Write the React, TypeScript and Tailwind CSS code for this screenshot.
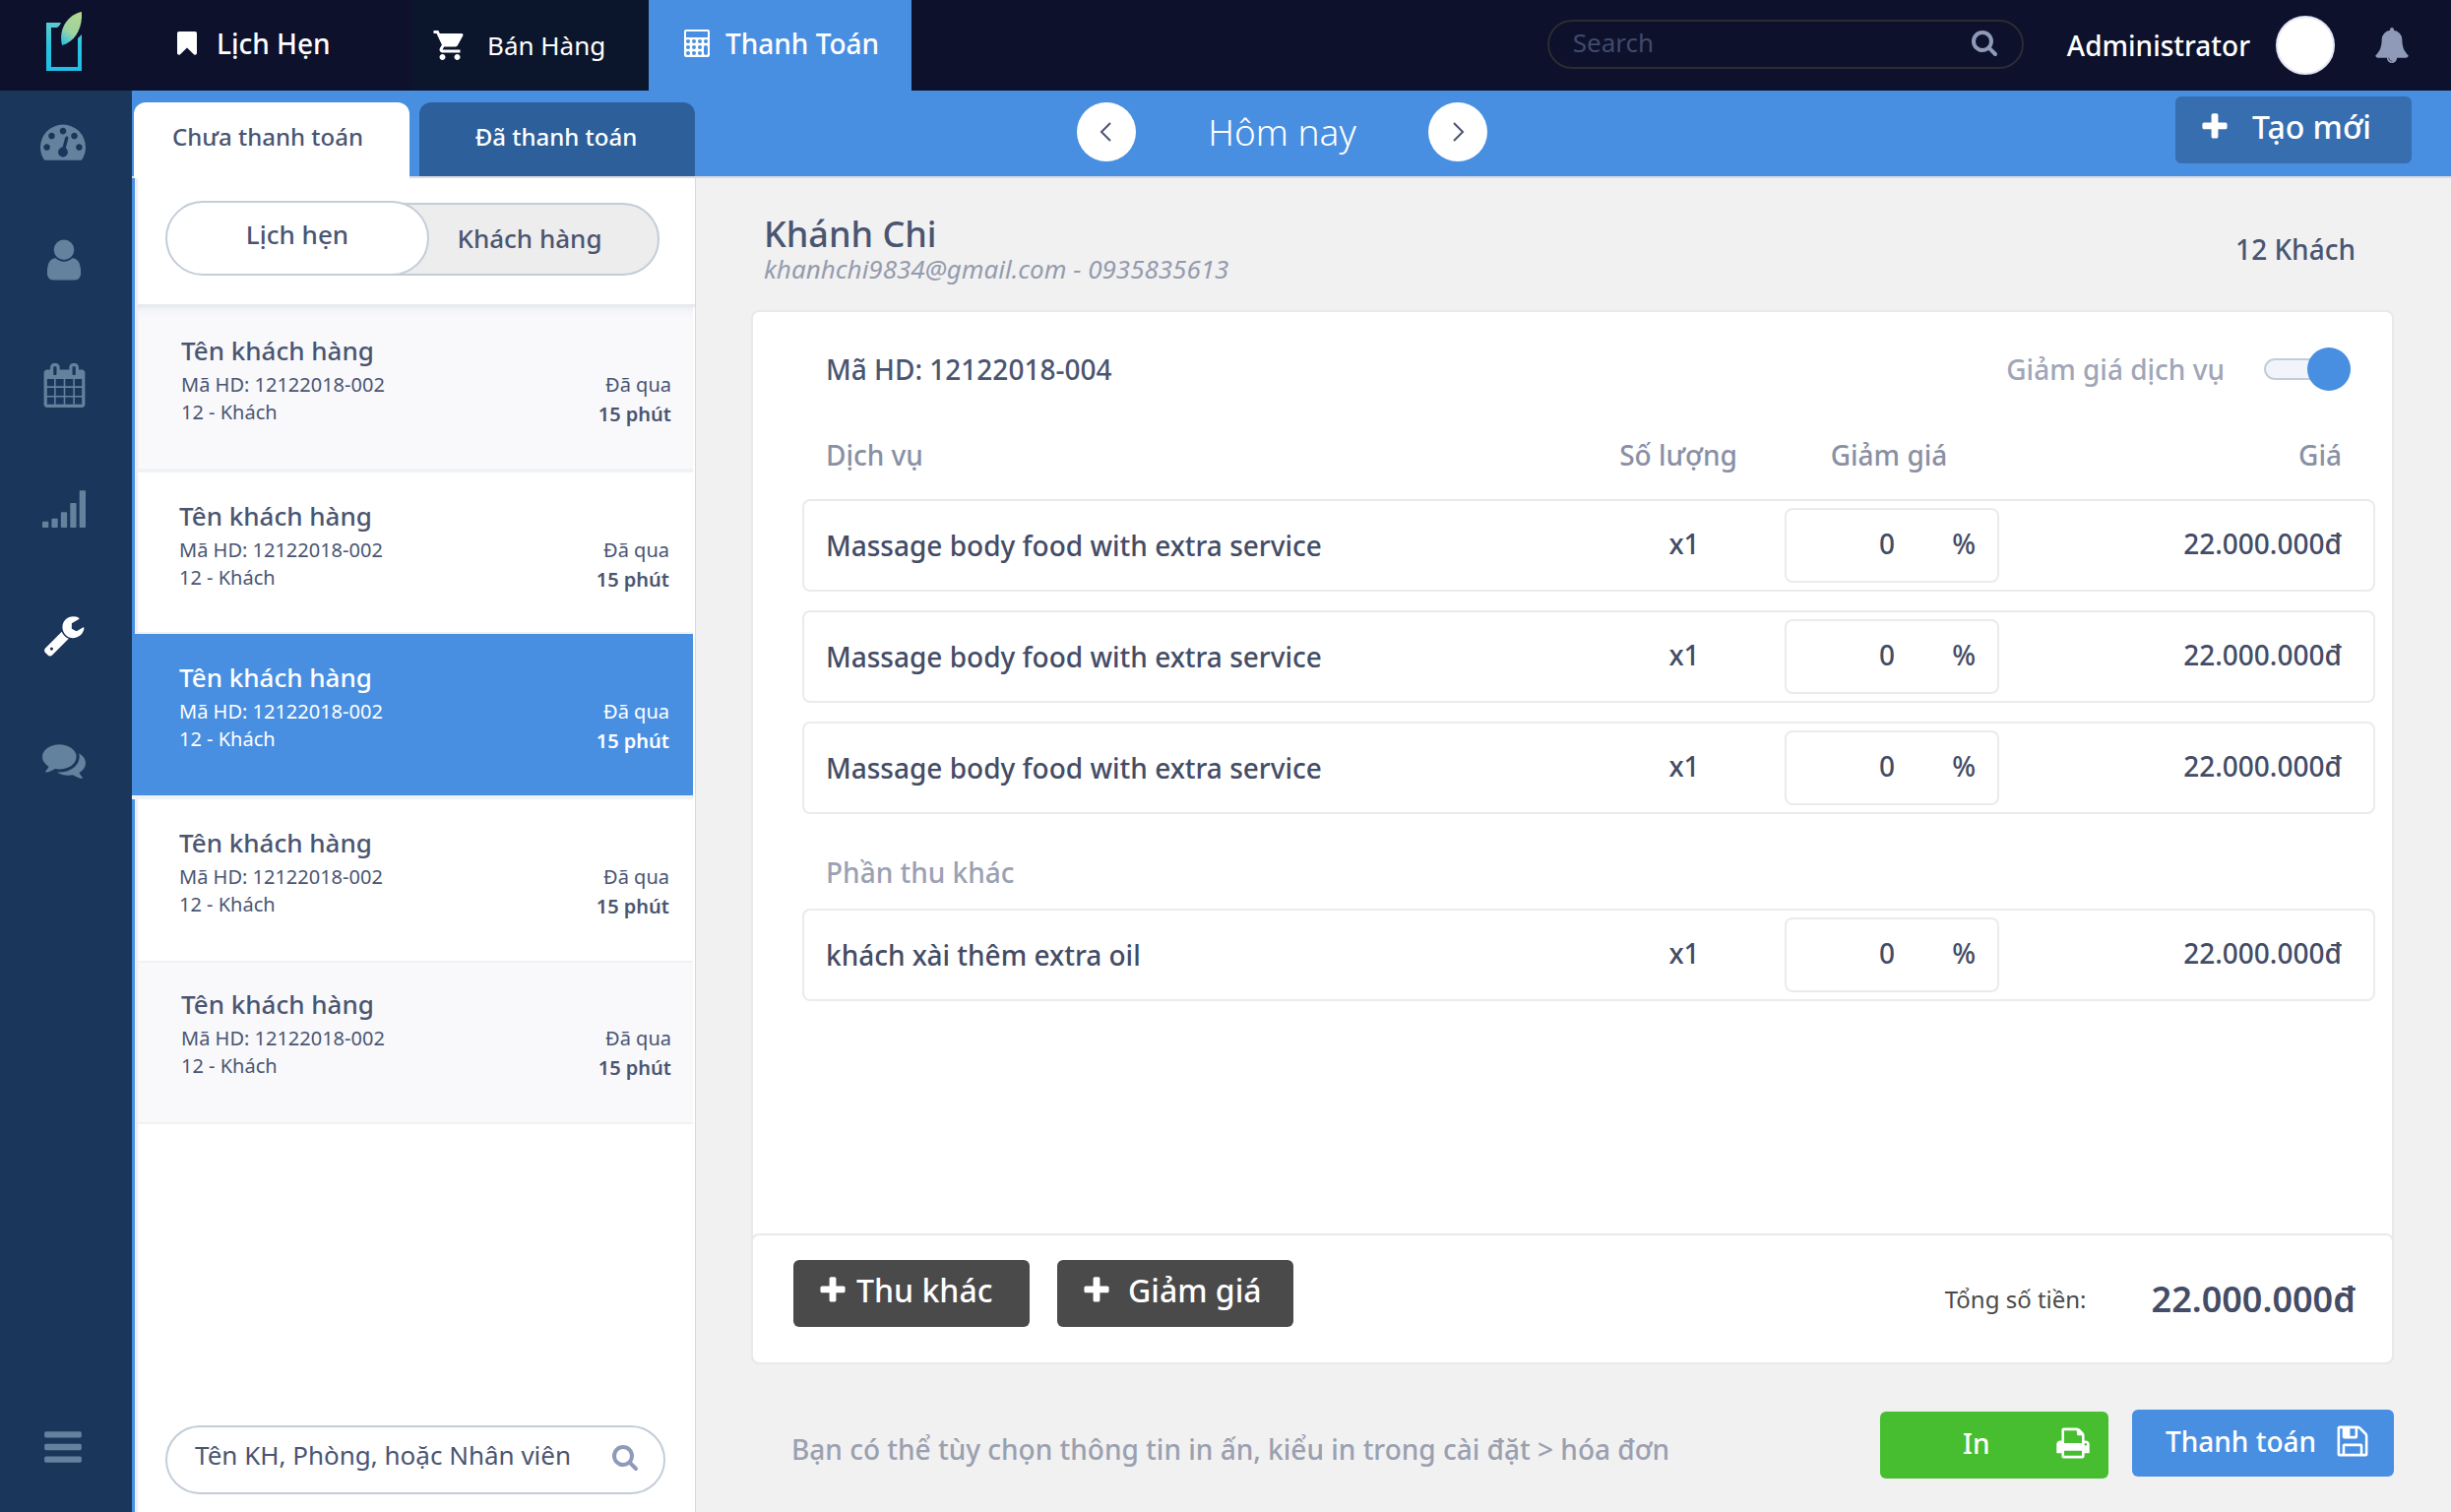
import type { ReactNode } from "react";
import { MdShoppingCart } from "react-icons/md";

const ICONS = {
  search:
    "M1216 832q0-185-131.5-316.5t-316.5-131.5-316.5 131.5-131.5 316.5 131.5 316.5 316.5 131.5 316.5-131.5 131.5-316.5zm512 832q0 52-38 90t-90 38q-54 0-90-38l-343-342q-179 124-399 124-143 0-273.5-55.5t-225-150-150-225-55.5-273.5 55.5-273.5 150-225 225-150 273.5-55.5 273.5 55.5 225 150 150 225 55.5 273.5q0 220-124 399l343 343q37 37 37 90z",
  plus: "M1600 736v192q0 40-28 68t-68 28h-416v416q0 40-28 68t-68 28h-192q-40 0-68-28t-28-68v-416h-416q-40 0-68-28t-28-68v-192q0-40 28-68t68-28h416v-416q0-40 28-68t68-28h192q40 0 68 28t28 68v416h416q40 0 68 28t28 68z",
  bars: "M1664 1344v128q0 26-19 45t-45 19h-1408q-26 0-45-19t-19-45v-128q0-26 19-45t45-19h1408q26 0 45 19t19 45zm0-512v128q0 26-19 45t-45 19h-1408q-26 0-45-19t-19-45v-128q0-26 19-45t45-19h1408q26 0 45 19t19 45zm0-512v128q0 26-19 45t-45 19h-1408q-26 0-45-19t-19-45v-128q0-26 19-45t45-19h1408q26 0 45 19t19 45z",
  gauge:
    "M384 1152q0-53-37.5-90.5t-90.5-37.5-90.5 37.5-37.5 90.5 37.5 90.5 90.5 37.5 90.5-37.5 37.5-90.5zm192-448q0-53-37.5-90.5t-90.5-37.5-90.5 37.5-37.5 90.5 37.5 90.5 90.5 37.5 90.5-37.5 37.5-90.5zm428 481l101-382q6-26-7.5-48.5t-38.5-29.5-48 6.5-30 39.5l-101 382q-60 5-107 43.5t-63 98.5q-20 77 20 146t117 89 146-20 89-117q16-60-6-117t-72-91zm660-33q0-53-37.5-90.5t-90.5-37.5-90.5 37.5-37.5 90.5 37.5 90.5 90.5 37.5 90.5-37.5 37.5-90.5zm-640-640q0-53-37.5-90.5t-90.5-37.5-90.5 37.5-37.5 90.5 37.5 90.5 90.5 37.5 90.5-37.5 37.5-90.5zm448 192q0-53-37.5-90.5t-90.5-37.5-90.5 37.5-37.5 90.5 37.5 90.5 90.5 37.5 90.5-37.5 37.5-90.5zm320 448q0 261-141 483-19 29-54 29h-1402q-35 0-54-29-141-221-141-483 0-182 71-348t191-286 286-191 348-71 348 71 286 191 191 286 71 348z",
  user: "M1536 1399q0 109-62.5 187t-150.5 78h-854q-88 0-150.5-78t-62.5-187q0-85 8.5-160.5t31.5-152 58.5-131 94-89 134.5-34.5q131 128 313 128t313-128q76 0 134.5 34.5t94 89 58.5 131 31.5 152 8.5 160.5zm-256-887q0 159-112.5 271.5t-271.5 112.5-271.5-112.5-112.5-271.5 112.5-271.5 271.5-112.5 271.5 112.5 112.5 271.5z",
  calendar:
    "M192 1664h288v-288h-288v288zm352 0h320v-288h-320v288zm-352-352h288v-320h-288v320zm352 0h320v-320h-320v320zm-352-384h288v-288h-288v288zm736 736h320v-288h-320v288zm-384-736h320v-288h-320v288zm768 736h288v-288h-288v288zm-384-352h320v-320h-320v320zm-352-864v-288q0-13-9.5-22.5t-22.5-9.5h-64q-13 0-22.5 9.5t-9.5 22.5v288q0 13 9.5 22.5t22.5 9.5h64q13 0 22.5-9.5t9.5-22.5zm736 864h288v-320h-288v320zm-384-384h320v-288h-320v288zm384 0h288v-288h-288v288zm32-480v-288q0-13-9.5-22.5t-22.5-9.5h-64q-13 0-22.5 9.5t-9.5 22.5v288q0 13 9.5 22.5t22.5 9.5h64q13 0 22.5-9.5t9.5-22.5zm384-64v1280q0 52-38 90t-90 38h-1408q-52 0-90-38t-38-90v-1280q0-52 38-90t90-38h128v-96q0-66 47-113t113-47h64q66 0 113 47t47 113v96h384v-96q0-66 47-113t113-47h64q66 0 113 47t47 113v96h128q52 0 90 38t38 90z",
  signal:
    "M32 1376h192q32 0 32 32v192q0 32-32 32h-192q-32 0-32-32v-192q0-32 32-32zM416 1248h192q32 0 32 32v320q0 32-32 32h-192q-32 0-32-32v-320q0-32 32-32zM800 992h192q32 0 32 32v576q0 32-32 32h-192q-32 0-32-32v-576q0-32 32-32zM1184 608h192q32 0 32 32v960q0 32-32 32h-192q-32 0-32-32v-960q0-32 32-32zM1568 96h192q32 0 32 32v1472q0 32-32 32h-192q-32 0-32-32v-1472q0-32 32-32z",
  wrench:
    "M448 1472q0-26-19-45t-45-19-45 19-19 45 19 45 45 19 45-19 19-45zm644-420l-682 682q-37 37-90 37-52 0-91-37l-106-108q-38-36-38-90 0-53 38-91l681-681q39 98 114.5 173.5t173.5 114.5zm634-435q0 39-23 106-47 134-164.5 217.5t-258.5 83.5q-185 0-316.5-131.5t-131.5-316.5 131.5-316.5 316.5-131.5q58 0 121.5 16.5t107.5 46.5q16 11 16 28t-16 28l-293 169v224l193 107q5-3 79-48.5t135.5-81 70.5-35.5q15 0 23.5 10t8.5 25z",
  comments:
    "M1408 768q0 139-94 257t-256.5 186.5-353.5 68.5q-86 0-176-16-124 88-278 128-36 9-86 16h-3q-11 0-20.5-8t-11.5-21q-1-3-1-6.5t.5-6.5 2-6l2.5-5 3.5-5.5 4-5 4.5-5 4-4.5q5-6 23-25t26-29.5 22.5-29 25-38.5 20.5-44q-124-72-195-177t-71-224q0-139 94-257t256.5-186.5 353.5-68.5 353.5 68.5 256.5 186.5 94 257zm384 256q0 120-71 224.5t-195 176.5q10 24 20.5 44t25 38.5 22.5 29 26 29.5 23 25q1 1 4 4.5t4.5 5 4 5 3.5 5.5l2.5 5 2 6 .5 6.5-1 6.5q-3 14-13 22t-22 7q-50-7-86-16-154-40-278-128-90 16-176 16-271 0-472-132 58 4 88 4 161 0 309-45t264-129q125-92 192-212t67-254q0-77-23-152 129 71 204 178t75 230z",
  print:
    "M448 1536h896v-256h-896v256zm0-640h896v-384h-160q-40 0-68-28t-28-68v-160h-640v640zm1152 64q0-26-19-45t-45-19-45 19-19 45 19 45 45 19 45-19 19-45zm128 0v416q0 13-9.5 22.5t-22.5 9.5h-224v160q0 40-28 68t-68 28h-960q-40 0-68-28t-28-68v-160h-224q-13 0-22.5-9.5t-9.5-22.5v-416q0-79 56.5-135.5t135.5-56.5h64v-544q0-40 28-68t68-28h672q40 0 88 20t76 48l152 152q28 28 48 76t20 88v256h64q79 0 135.5 56.5t56.5 135.5z",
  save: "M512 1536h768v-384h-768v384zm896 0h128v-896q0-14-10-38.5t-20-34.5l-281-281q-10-10-34-20t-39-10v416q0 40-28 68t-68 28h-576q-40 0-68-28t-28-68v-416h-128v1280h128v-416q0-40 28-68t68-28h832q40 0 68 28t28 68v416zm-384-928v-320q0-13-9.5-22.5t-22.5-9.5h-192q-13 0-22.5 9.5t-9.5 22.5v320q0 13 9.5 22.5t22.5 9.5h192q13 0 22.5-9.5t9.5-22.5zm640 32v928q0 40-28 68t-68 28h-1344q-40 0-68-28t-28-68v-1344q0-40 28-68t68-28h928q40 0 88 20t76 48l280 280q28 28 48 76t20 88z",
  bell: "M912 1696q0-16-16-16-59 0-101.5-42.5t-42.5-101.5q0-16-16-16t-16 16q0 73 51.5 124.5t124.5 51.5q16 0 16-16zm816-288q0 52-38 90t-90 38h-448q0 106-75 181t-181 75-181-75-75-181h-448q-52 0-90-38t-38-90q50-42 91-88t85-119.5 74.5-158.5 50-206 19.5-260q0-152 117-282.5t307-158.5q-8-19-8-39 0-40 28-68t68-28 68 28 28 68q0 20-8 39 190 28 307 158.5t117 282.5q0 139 19.5 260t50 206 74.5 158.5 85 119.5 91 88z",
  bookmark:
    "M1420 128q23 0 44 9 33 13 52.5 41t19.5 62v1289q0 34-19.5 62t-52.5 41q-19 8-44 8-48 0-83-32l-441-424-441 424q-36 33-83 33-23 0-44-9-33-13-52.5-41t-19.5-62v-1289q0-34 19.5-62t52.5-41q21-9 44-9h1048z",
};

type IconName = keyof typeof ICONS;

function Icon({ name, className }: { name: IconName; className: string }) {
  return (
    <svg viewBox="0 0 1792 1792" fill="currentColor" fillRule="nonzero" aria-hidden="true" className={className}>
      <path d={ICONS[name]} />
    </svg>
  );
}

function Logo() {
  return (
    <svg viewBox="0 0 36 62" className="h-[62px] w-9" aria-hidden="true">
      <defs>
        <linearGradient id="frame" x1="0" y1="0" x2="0" y2="1">
          <stop offset="0" stopColor="#5ccbcf" />
          <stop offset="0.5" stopColor="#27c4e2" />
          <stop offset="1" stopColor="#1fbfe6" />
        </linearGradient>
        <linearGradient id="leaf" x1="0.7" y1="0" x2="0.2" y2="1">
          <stop offset="0" stopColor="#b0d88f" />
          <stop offset="0.6" stopColor="#9ed2a2" />
          <stop offset="1" stopColor="#2cc3df" />
        </linearGradient>
      </defs>
      <path d="M0 12H15Q14 15 11 17H5V57H32V28L36 24V61H0Z" fill="url(#frame)" />
      <path d="M36 1C37 17 30 31 16 35C12 18 22 4 36 1Z" fill="url(#leaf)" />
    </svg>
  );
}

function CalculatorIcon() {
  return (
    <svg viewBox="0 0 26 28" className="h-7 w-[26px]" aria-hidden="true">
      <rect width="26" height="28" rx="2" fill="#fff" />
      <g fill="#488fe2">
        <rect x="2" y="2" width="22" height="6" />
        <circle cx="4" cy="12" r="2" />
        <circle cx="10" cy="12" r="2" />
        <circle cx="16" cy="12" r="2" />
        <circle cx="22" cy="12" r="2" />
        <circle cx="4" cy="18" r="2" />
        <circle cx="10" cy="18" r="2" />
        <circle cx="16" cy="18" r="2" />
        <circle cx="4" cy="24" r="2" />
        <circle cx="10" cy="24" r="2" />
        <circle cx="16" cy="24" r="2" />
        <rect x="20" y="16" width="4" height="10" rx="2" />
      </g>
    </svg>
  );
}

function Header() {
  return (
    <header className="flex h-[92px] items-stretch bg-[#0d112c] text-[28px] font-medium text-white">
      <a href="#home" aria-label="Home" className="flex w-[134px] items-center pb-2 pl-[47px]">
        <Logo />
      </a>
      <nav className="flex items-stretch">
        <a href="#lich-hen" className="flex w-[284px] items-center gap-4 pb-1 pl-[42px]">
          <Icon name="bookmark" className="size-7" />
          Lịch Hẹn
        </a>
        <a href="#ban-hang" className="flex w-[241px] items-center gap-5 bg-[#0b152c] pl-[21px] text-[26px] font-normal">
          <MdShoppingCart className="size-9" aria-hidden="true" />
          Bán Hàng
        </a>
        <a href="#thanh-toan" className="flex w-[267px] items-center gap-4 bg-[#488fe2] pb-1 pl-9">
          <CalculatorIcon />
          Thanh Toán
        </a>
      </nav>
      <div className="ml-auto flex items-center pr-[42px]">
        <label className="mr-11 mb-[2px] flex h-[50px] w-[484px] items-center rounded-full border-2 border-[#292d33] pr-6 pl-6">
          <input
            type="text"
            aria-label="Search"
            placeholder="Search"
            className="mb-1 min-w-0 flex-1 bg-transparent text-[26px] font-normal outline-none placeholder:text-[#404a6b]"
          />
          <Icon name="search" className="mb-1 size-7 text-[#8f9ab8]" />
        </label>
        <span>Administrator</span>
        <span className="ml-[26px] size-[60px] rounded-full border-2 border-[#e3e6f2] bg-white" />
        <button type="button" aria-label="Notifications" className="ml-10">
          <Icon name="bell" className="size-9 text-[#8f9ab8]" />
        </button>
      </div>
    </header>
  );
}

function SideButton({ name, label, size, active }: { name: IconName; label: string; size: string; active?: boolean }) {
  return (
    <button
      type="button"
      aria-label={label}
      className={`flex h-[46px] w-full items-center justify-center ${active ? "text-white" : "text-[#62829d]"}`}
    >
      <Icon name={name} className={size} />
    </button>
  );
}

function Sidebar() {
  return (
    <aside className="flex w-[134px] shrink-0 flex-col bg-[#1b365b] pt-7 pr-1 pb-[43px]">
      <nav className="flex flex-col gap-[81px]">
        <div className="-mb-[6px] pr-[3px]">
          <SideButton name="gauge" label="Dashboard" size="size-[46px]" />
        </div>
        <SideButton name="user" label="Customers" size="size-12" />
        <SideButton name="calendar" label="Calendar" size="size-[45px]" />
        <SideButton name="signal" label="Reports" size="size-11" />
        <SideButton name="wrench" label="Tools" size="size-11" active />
        <SideButton name="comments" label="Messages" size="size-11" />
      </nav>
      <div className="mt-auto pr-[3px]">
        <SideButton name="bars" label="Menu" size="size-11" />
      </div>
    </aside>
  );
}

type Tone = "tinted" | "plain" | "active";

const CUSTOMERS: { tone: Tone; className: string }[] = [
  { tone: "tinted", className: "h-[168px] border-b-4 bg-[#f9f9fc] pt-[26px] pl-11 pr-[22px] shadow-[inset_0_8px_8px_-6px_#e7ebee]" },
  { tone: "plain", className: "h-[164px] border-b-2 pt-[26px] pl-[42px] pr-6" },
  { tone: "active", className: "-ml-[6px] h-[168px] border-b-4 bg-[#488fe2] bg-clip-padding pt-[26px] pl-12 pr-6 text-white" },
  { tone: "plain", className: "h-[166px] border-b-2 pt-[26px] pl-[42px] pr-6" },
  { tone: "tinted", className: "h-[164px] border-b-2 bg-[#f9f9fc] pt-6 pl-11 pr-[22px]" },
];

function CustomerRow({ tone, className }: { tone: Tone; className: string }) {
  return (
    <li className={`border-[#eff3f6] ${className}`}>
      <a href="#khach-hang" aria-current={tone === "active"} className="block">
        <h3 className="text-[26px] leading-9 font-medium">Tên khách hàng</h3>
        <div className="mt-[3px] flex justify-between text-[20px] leading-7">
          <span>Mã HD: 12122018-002</span>
          <span>Đã qua</span>
        </div>
        <div className="flex justify-between text-[20px] leading-7">
          <span>12 - Khách</span>
          <span className="pt-[2px] font-semibold">15 phút</span>
        </div>
      </a>
    </li>
  );
}

function CustomerPanel() {
  return (
    <section className="flex w-[573px] shrink-0 border-r border-l-[3px] border-[#d8d8d8] border-l-[#488fe2]">
      <div className="flex min-w-0 flex-1 flex-col border-l-[3px] border-[#eeeef0] bg-white">
        <div className="-mt-px flex pt-6 pl-7">
          <button
            type="button"
            className="z-10 h-[76px] w-[268px] rounded-full border-2 border-[#c3cdd8] bg-white pb-2 text-[26px] font-medium"
          >
            Lịch hẹn
          </button>
          <button
            type="button"
            className="mt-[2px] -ml-[50px] h-[74px] w-[284px] rounded-r-full border-2 border-[#c3cdd8] bg-[#ededed] pb-[2px] pl-5 text-[26px] font-medium"
          >
            Khách hàng
          </button>
        </div>
        <ul className="mt-[29px] border-t-[3px] border-[#e7ebee] pr-[2px]">
          {CUSTOMERS.map((c, i) => (
            <CustomerRow key={i} {...c} />
          ))}
        </ul>
        <label className="mt-auto mr-[30px] mb-[18px] ml-7 flex h-[70px] items-center rounded-full border-2 border-[#c3cdd8] pr-[25px] pl-7">
          <input
            type="text"
            aria-label="Tìm kiếm khách hàng"
            defaultValue="Tên KH, Phòng, hoặc Nhân viên"
            className="mb-[10px] min-w-0 flex-1 bg-transparent text-[26px] outline-none"
          />
          <Icon name="search" className="mb-[6px] size-7 text-[#8f9ab8]" />
        </label>
      </div>
    </section>
  );
}

function DayBar() {
  return (
    <div className="flex h-[89px] border-b-2 border-[#dcdce0] bg-[#488fe2]">
      <div className="flex gap-[10px] pt-3 pl-[2px] text-[24px] font-medium">
        <button type="button" className="-mb-[2px] w-[280px] rounded-t-xl bg-white pr-2 pb-2">
          Chưa thanh toán
        </button>
        <button type="button" className="w-[280px] rounded-t-xl bg-[#2d5f9a] pr-[2px] pb-[6px] text-white">
          Đã thanh toán
        </button>
      </div>
      <div className="flex flex-1 items-center justify-between pr-10 pb-[3px] pl-[388px] text-white">
        <div className="flex w-[417px] items-center justify-between">
          <button type="button" aria-label="Previous day" className="flex size-[60px] items-center justify-center rounded-full bg-white">
            <svg viewBox="0 0 24 24" className="size-6" fill="none" stroke="#4a5572" strokeWidth="2" aria-hidden="true">
              <path d="M16 3L7 12L16 21" />
            </svg>
          </button>
          <h1 className="text-[37px] font-light">Hôm nay</h1>
          <button type="button" aria-label="Next day" className="flex size-[60px] items-center justify-center rounded-full bg-white">
            <svg viewBox="0 0 24 24" className="size-6" fill="none" stroke="#4a5572" strokeWidth="2" aria-hidden="true">
              <path d="M8 3L17 12L8 21" />
            </svg>
          </button>
        </div>
        <button
          type="button"
          className="mb-1 flex h-[68px] w-[240px] items-center gap-[22px] rounded-md bg-[#366eb0] pb-[6px] pl-6 text-[32px] font-medium"
        >
          <Icon name="plus" className="size-8" />
          Tạo mới
        </button>
      </div>
    </div>
  );
}

function ItemRow({ name }: { name: string }) {
  const cell = "h-[94px] border-y-2 border-[#ebebeb] p-0";
  return (
    <tr className="text-[#444c66]">
      <td className={`${cell} rounded-l-lg border-l-2 pl-[22px]`}>{name}</td>
      <td className={`${cell} pb-1 pl-[2px] text-center`}>x1</td>
      <td className={cell}>
        <label className="mx-auto flex h-[76px] w-[218px] items-center rounded-lg border-2 border-[#ebebeb] pr-[22px] pb-1">
          <input type="text" aria-label={`Giảm giá: ${name}`} defaultValue="0" className="w-[110px] bg-transparent text-right outline-none" />
          <span className="ml-auto">%</span>
        </label>
      </td>
      <td className={`${cell} rounded-r-lg border-r-2 pr-8 pb-1 text-right`}>22.000.000đ</td>
    </tr>
  );
}

function ItemsTable() {
  return (
    <table className="w-full border-separate border-spacing-x-0 border-spacing-y-[19px] text-[28px] leading-9 font-medium">
      <thead>
        <tr className="text-[#8a90a4]">
          <th className="h-[52px] p-0 pl-6 text-left font-medium">Dịch vụ</th>
          <th className="w-[170px] p-0 pr-[10px] text-center font-medium">Số lượng</th>
          <th className="w-[254px] p-0 pr-[6px] text-center font-medium">Giảm giá</th>
          <th className="w-[364px] p-0 pr-[34px] text-right font-medium">Giá</th>
        </tr>
      </thead>
      <tbody>
        <ItemRow name="Massage body food with extra service" />
        <ItemRow name="Massage body food with extra service" />
        <ItemRow name="Massage body food with extra service" />
        <tr className="text-[#9ba1b3]">
          <th colSpan={4} className="h-[58px] p-0 pl-6 text-left align-bottom font-medium">
            Phần thu khác
          </th>
        </tr>
        <ItemRow name="khách xài thêm extra oil" />
      </tbody>
    </table>
  );
}

function DarkButton({ gap, children }: { gap: string; children: ReactNode }) {
  return (
    <button
      type="button"
      className={`flex h-[68px] w-[240px] items-center rounded-md bg-[#4a4a4a] pb-[6px] pl-6 text-[32px] font-medium text-white ${gap}`}
    >
      <Icon name="plus" className="size-8" />
      {children}
    </button>
  );
}

function Invoice() {
  return (
    <main className="flex flex-1 flex-col bg-[#f1f1f1] pr-[58px] pb-[34px] pl-14">
      <div className="flex items-center justify-between pt-[34px] pr-[39px] pl-[13px]">
        <div>
          <h2 className="text-[36px] leading-[46px] font-medium">Khánh Chi</h2>
          <p className="text-[26px] leading-6 text-[#959bae] italic">khanhchi9834@gmail.com - 0935835613</p>
        </div>
        <p className="pt-[6px] text-[28px] font-medium">12 Khách</p>
      </div>
      <section className="mt-[30px] flex flex-1 flex-col rounded-lg border-2 border-[#e9e9e9] bg-white">
        <div className="flex-1 pr-[17px] pl-[50px]">
          <div className="flex items-center justify-between pt-9 pr-[25px] pl-6 text-[28px] font-medium">
            <h3>Mã HD: 12122018-004</h3>
            <label className="flex items-center gap-10 text-[#a0a6b7]">
              Giảm giá dịch vụ
              <span className="relative flex h-11 w-[88px] items-center">
                <input type="checkbox" role="switch" defaultChecked className="peer absolute inset-0 m-0 size-full opacity-0" />
                <span className="h-[22px] w-full rounded-full border-2 border-[#c3cdd8] bg-[#f2f4fb]" />
                <span className="absolute left-0 size-11 rounded-full bg-[#488fe2] peer-checked:left-11" />
              </span>
            </label>
          </div>
          <div className="pt-5">
            <ItemsTable />
          </div>
        </div>
        <div className="-mx-[2px] -mb-[2px] flex h-[133px] items-center justify-between rounded-lg border-2 border-[#e9e9e9] pr-[37px] pl-[41px]">
          <div className="mb-3 flex gap-7">
            <DarkButton gap="gap-2">Thu khác</DarkButton>
            <DarkButton gap="gap-4">Giảm giá</DarkButton>
          </div>
          <p className="flex items-center">
            <span className="mr-[66px] text-[24px] text-[#4a4a4a]">Tổng số tiền:</span>
            <span className="text-[36px] font-semibold text-[#444c66]">22.000.000đ</span>
          </p>
        </div>
      </section>
      <footer className="mt-[46px] flex items-start text-[28px] font-medium text-white">
        <p className="mr-auto pt-[19px] pl-[41px] text-[#9aa0b0]">
          Bạn có thể tùy chọn thông tin in ấn, kiểu in trong cài đặt &gt; hóa đơn
        </p>
        <button type="button" className="mt-[2px] mr-6 flex h-[68px] w-[232px] items-center justify-between rounded-md bg-[#46be30] pr-[18px] pb-1 pl-[84px]">
          In
          <Icon name="print" className="size-9" />
        </button>
        <button type="button" className="flex h-[68px] w-[266px] items-center justify-between rounded-md bg-[#488fe2] pr-6 pb-1 pl-[34px]">
          Thanh toán
          <Icon name="save" className="size-9" />
        </button>
      </footer>
    </main>
  );
}

export default function App() {
  return (
    <div className="flex min-h-screen flex-col font-['Noto_Sans','Open_Sans',sans-serif] text-[#4a5572]">
      <Header />
      <div className="flex flex-1">
        <Sidebar />
        <div className="flex min-w-0 flex-1 flex-col">
          <DayBar />
          <div className="flex flex-1">
            <CustomerPanel />
            <Invoice />
          </div>
        </div>
      </div>
    </div>
  );
}
